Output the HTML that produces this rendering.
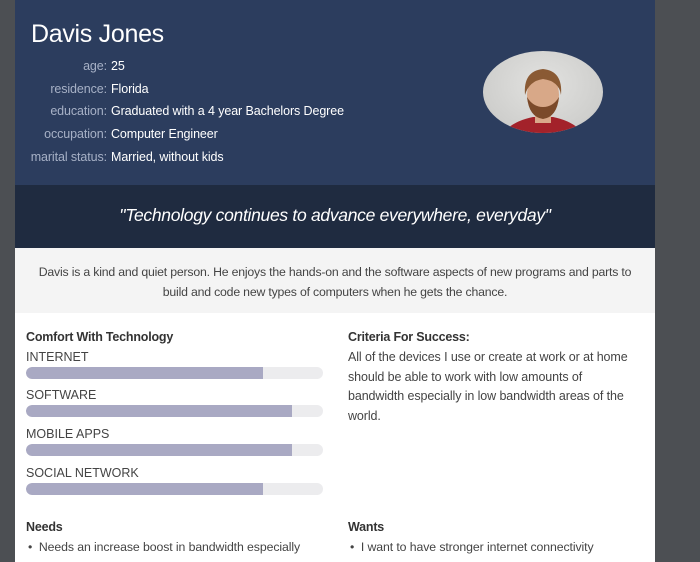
<!DOCTYPE html>
<html><head><style>
*{margin:0;padding:0;box-sizing:border-box}
body{width:700px;height:562px;overflow:hidden;background:#4c4f53;font-family:"Liberation Sans",sans-serif;position:relative}
.card{position:absolute;left:15px;top:0;width:640px;height:562px;background:#fff}
.hdr{position:absolute;left:0;top:0;width:640px;height:185px;background:#2c3d5e;color:#fff}
h1{position:absolute;left:16px;top:20px;font-weight:normal;font-size:25px;letter-spacing:-0.3px}
.row{position:absolute;left:0;font-size:12.5px;white-space:nowrap;letter-spacing:-0.1px}
.row .k{display:inline-block;width:92px;text-align:right;color:#a7b1c6;margin-right:4px}
.row .v{color:#fff}
.photo{position:absolute;left:468px;top:51px;width:120px;height:82px;border-radius:50%;background:radial-gradient(ellipse at 50% 40%,#e2e2e0 0%,#cfcfcd 70%,#bbb 100%);overflow:hidden}
.quote{position:absolute;left:0;top:185px;width:640px;height:63px;background:#1f2b40;color:#fff;font-style:italic;font-size:17.5px;text-align:center;line-height:60px;letter-spacing:-0.3px}
.sum{position:absolute;left:0;top:248px;width:640px;height:65px;background:#f4f4f4;color:#444;font-size:12.3px;text-align:center;line-height:20px;padding:14px 16px 0;letter-spacing:-0.2px}
.t{position:absolute;font-weight:bold;font-size:12.5px;color:#333;letter-spacing:-0.2px}
.lbl{position:absolute;left:11px;font-size:12.5px;color:#444}
.bar{position:absolute;left:11px;width:297px;height:12px;border-radius:6px;background:#ececee;overflow:hidden}
.bar i{display:block;height:12px;background:#a9a9c3;border-radius:6px 0 0 6px}
.p{position:absolute;left:333px;top:348px;width:290px;font-size:12.5px;line-height:19.5px;color:#444;letter-spacing:-0.1px}
.li{position:absolute;font-size:12.3px;color:#444;letter-spacing:-0.1px}
</style></head><body>
<div class="card">
<div class="hdr">
<h1>Davis Jones</h1>
<div class="row" style="top:59px"><span class="k">age:</span><span class="v">25</span></div>
<div class="row" style="top:82px"><span class="k">residence:</span><span class="v">Florida</span></div>
<div class="row" style="top:104px"><span class="k">education:</span><span class="v">Graduated with a 4 year Bachelors Degree</span></div>
<div class="row" style="top:127px"><span class="k">occupation:</span><span class="v">Computer Engineer</span></div>
<div class="row" style="top:150px"><span class="k">marital status:</span><span class="v">Married, without kids</span></div>
<div class="photo"><svg width="120" height="82" viewBox="0 0 120 82">
<path d="M20 82 Q30 70 50 66 L70 66 Q90 70 100 82Z" fill="#a3222a"/>
<path d="M52 60 L68 60 L68 72 L52 72Z" fill="#d9a98a"/>
<ellipse cx="60" cy="44" rx="16" ry="21" fill="#d8a888"/>
<path d="M44 46 Q46 66 60 68 Q74 66 76 46 Q70 56 60 56 Q50 56 44 46Z" fill="#7b4a2a"/>
<path d="M42 44 Q40 20 60 18 Q80 20 78 44 Q76 30 60 28 Q46 30 42 44Z" fill="#8a5a34"/>
</svg></div>
</div>
<div class="quote">"Technology continues to advance everywhere, everyday"</div>
<div class="sum">Davis is a kind and quiet person. He enjoys the hands-on and the software aspects of new programs and parts to build and code new types of computers when he gets the chance.</div>
<div class="t" style="left:11px;top:330px">Comfort With Technology</div>
<div class="lbl" style="top:350px">INTERNET</div><div class="bar" style="top:367px"><i style="width:237px"></i></div>
<div class="lbl" style="top:388px">SOFTWARE</div><div class="bar" style="top:405px"><i style="width:266px"></i></div>
<div class="lbl" style="top:427px">MOBILE APPS</div><div class="bar" style="top:444px"><i style="width:266px"></i></div>
<div class="lbl" style="top:466px">SOCIAL NETWORK</div><div class="bar" style="top:483px"><i style="width:237px"></i></div>
<div class="t" style="left:333px;top:330px">Criteria For Success:</div>
<div class="p">All of the devices I use or create at work or at home should be able to work with low amounts of bandwidth especially in low bandwidth areas of the world.</div>
<div class="t" style="left:11px;top:520px">Needs</div>
<div class="li" style="left:13px;top:540px">•&nbsp;&nbsp;Needs an increase boost in bandwidth especially</div>
<div class="t" style="left:333px;top:520px">Wants</div>
<div class="li" style="left:335px;top:540px">•&nbsp;&nbsp;I want to have stronger internet connectivity</div>
</div>
</body></html>
